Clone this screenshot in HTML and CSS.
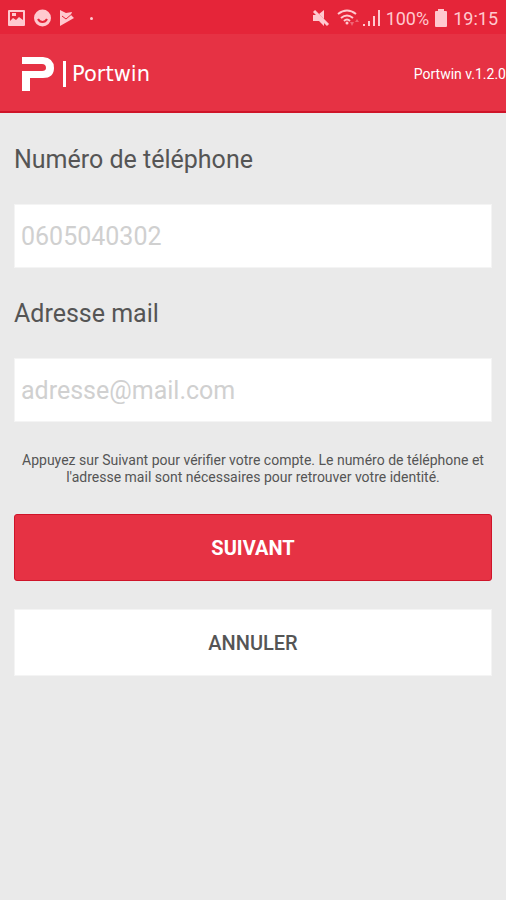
FILE: index.html
```
<!doctype html>
<html lang="fr">
<head>
    <title>Portwin</title>
    <meta charset="utf-8" />
    <meta name="viewport" content="width=device-width, initial-scale=1" />
    <link rel="stylesheet" href="styles.css">
</head>

<body>
<div class="statusbar">
	<div class="notifications">
		<svg width="18" height="18" viewBox="0 0 18 18">
			<path fill="currentColor" fill-rule="evenodd" d="M2 1H16Q17 1 17 2V16Q17 17 16 17H1Q0 17 0 16V2Q0 1 1 1ZM2 3V12L5 9L8 11L11 8L15 11V3ZM4 4H8V7H4Z"/>
		</svg>
		<svg width="18" height="18" viewBox="0 0 18 18">
			<circle cx="8.500" cy="9" r="8.500" fill="currentColor"/>
			<path d="M4 10Q5.500 13 8.500 13Q11.500 13 13 10" fill="none" stroke="#e52539" stroke-width="2"/>
		</svg>
		<svg width="16" height="18" viewBox="0 0 16 18">
			<path fill="currentColor" d="M0 1L6 4L12 3L11 6L14 9L0 17Z"/>
			<path d="M2 7L6 10L13 4" fill="none" stroke="#e52539" stroke-width="1"/>
		</svg>
		<span class="dot"></span>
	</div>
	<div class="system">
		<svg width="18" height="18" viewBox="0 0 18 18">
			<path fill="currentColor" d="M1 6H5L12 13V17L7 12H1ZM7 5L12 1V10Z"/>
			<path d="M2 2L16 16" stroke="currentColor" stroke-width="3"/>
		</svg>
		<svg class="wifi" width="24" height="18" viewBox="0 0 24 18">
			<g fill="none" stroke="currentColor" stroke-width="2">
				<path d="M2 5Q11-2 20 5M5 9Q11 4 17 9M8 12Q11 9 14 12"/>
			</g>
			<circle cx="11" cy="14" r="1.500" fill="currentColor"/>
			<path fill="currentColor" opacity=".4" d="M14 13H18L16 17ZM19 13L21 10L23 13Z"/>
		</svg>
		<svg width="18" height="18" viewBox="0 0 18 18">
			<path fill="currentColor" d="M1 15H3V17H1ZM6 12H8V17H6ZM11 7H13V17H11ZM16 1H18V17H16Z"/>
		</svg>
		<span class="percent">100%</span>
		<svg width="12" height="18" viewBox="0 0 12 18">
			<path fill="currentColor" d="M3 0H9V2H11Q12 2 12 3V17Q12 18 11 18H1Q0 18 0 17V3Q0 2 1 2H3Z"/>
		</svg>
		<span class="clock">19:15</span>
	</div>
</div>

<header class="header">
	<div class="brand">
		<svg width="33" height="34" viewBox="0 0 33 34">
			<path fill="#fff" d="M0 0H21Q32 1 32 11Q32 21 21 21H8V34H0V14H20Q24 14 24 11Q24 7 20 7H0Z"/>
		</svg>
		<span class="bar"></span>
		<span class="name">Portwin</span>
	</div>
	<span class="version">Portwin v.1.2.0</span>
</header>

<form class="account">
	<label for="phone">Numéro de téléphone</label>
	<input type="tel" id="phone" placeholder="0605040302" />
	<label for="mail">Adresse mail</label>
	<input type="email" id="mail" placeholder="adresse@mail.com" />
	<p class="hint">Appuyez sur Suivant pour vérifier votre compte. Le numéro de téléphone et l'adresse mail sont nécessaires pour retrouver votre identité.</p>
	<button type="submit" class="next">SUIVANT</button>
	<button type="button" class="cancel">ANNULER</button>
</form>
</body>
</html>
```

FILE: styles.css
```
* {
	box-sizing: border-box;
}
body {
	margin: 0;
	font-family: Roboto, sans-serif;
	color: #555;
	background-color: #eaeaea;
}

.statusbar {
	display: flex;
	justify-content: space-between;
	align-items: center;
	height: 34px;
	padding: 2px 8px 0;
	color: #ffc9cf;
	background-color: #e52539;
}
.notifications, .system {
	display: flex;
	align-items: center;
}
.notifications {
	gap: 8px;
}
.dot {
	width: 3px;
	height: 3px;
	margin-left: 6px;
	border-radius: 50%;
	background-color: currentColor;
}
.system {
	gap: 6px;
	font-size: 18px;
}
.wifi {
	margin-right: -4px;
}

.header {
	display: flex;
	justify-content: space-between;
	align-items: center;
	height: 79px;
	padding: 2px 0 0 22px;
	color: #fff;
	background-color: #e63244;
	border-bottom: 2px solid #cf1429;
}
.brand {
	display: flex;
	align-items: center;
}
.bar {
	width: 3px;
	height: 26px;
	margin: 0 6px 0 8px;
	background-color: #fff;
}
.name {
	font-family: "DejaVu Sans", sans-serif;
	font-size: 21px;
}
.version {
	font-size: 14px;
}

.account {
	display: flex;
	flex-direction: column;
	padding: 31px 14px;
}
.account label {
	font-size: 25px;
	line-height: 32px;
}
.account input {
	height: 64px;
	margin: 28px 0 30px;
	padding: 0 6px;
	border: 1px solid #f4f4f4;
	font-family: inherit;
	font-size: 25px;
	background-color: #fff;
}
.account input::placeholder {
	color: #d0d0d0;
}
.hint {
	margin: 0 0 28px;
	font-size: 14px;
	line-height: 17px;
	text-align: center;
}
.account button {
	height: 67px;
	font-family: inherit;
	font-size: 20px;
}
.next {
	margin-bottom: 28px;
	border: 1px solid #cf1429;
	border-radius: 3px;
	font-weight: 700;
	color: #fff;
	background-color: #e63244;
}
.cancel {
	border: 1px solid #f4f4f4;
	font-weight: 500;
	color: #555;
	background-color: #fff;
}
```
